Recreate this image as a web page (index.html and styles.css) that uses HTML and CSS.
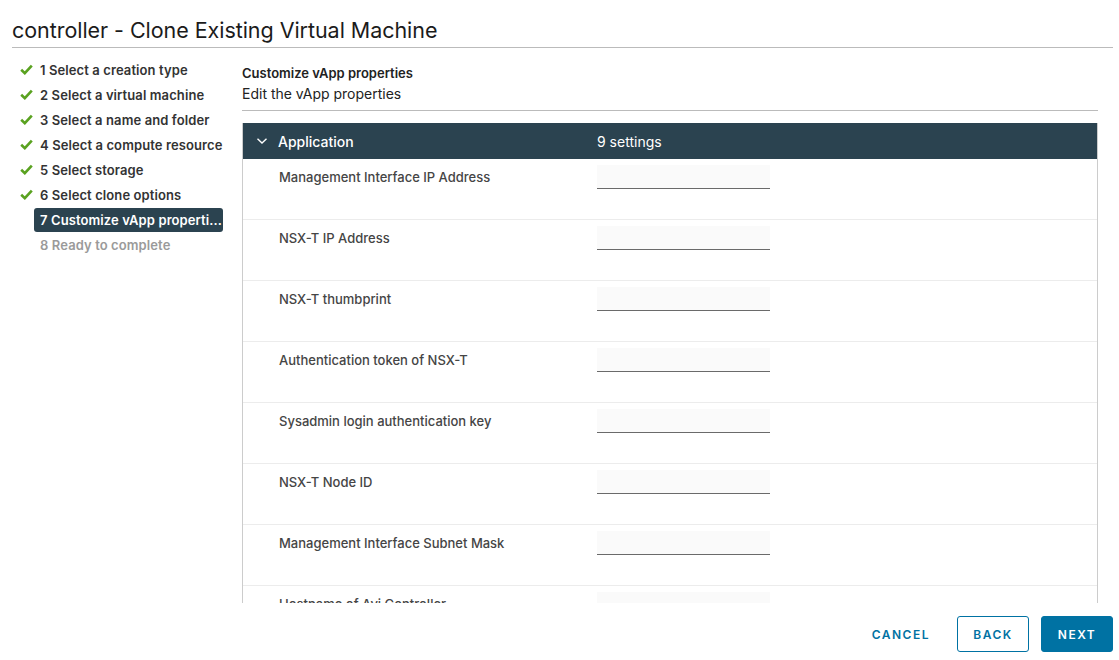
FILE: index.html
```html
<!DOCTYPE html>
<html>
<head>
<meta charset="utf-8">
<link rel="stylesheet" href="styles.css">
</head>
<body>
<div class="page">
  <header class="title-bar">
    <h1 class="title">controller - Clone Existing Virtual Machine</h1>
  </header>
  <div class="wizard">
    <nav class="steps">
      <div class="step done"><span class="check"><svg width="13" height="11" viewBox="0 0 13 11"><path d="M1.2 5.8 L4.8 9.2 L11.8 1.6" fill="none" stroke="#5aa220" stroke-width="2.6"/></svg></span><span class="step-label">1 Select a creation type</span></div>
      <div class="step done"><span class="check"><svg width="13" height="11" viewBox="0 0 13 11"><path d="M1.2 5.8 L4.8 9.2 L11.8 1.6" fill="none" stroke="#5aa220" stroke-width="2.6"/></svg></span><span class="step-label">2 Select a virtual machine</span></div>
      <div class="step done"><span class="check"><svg width="13" height="11" viewBox="0 0 13 11"><path d="M1.2 5.8 L4.8 9.2 L11.8 1.6" fill="none" stroke="#5aa220" stroke-width="2.6"/></svg></span><span class="step-label">3 Select a name and folder</span></div>
      <div class="step done"><span class="check"><svg width="13" height="11" viewBox="0 0 13 11"><path d="M1.2 5.8 L4.8 9.2 L11.8 1.6" fill="none" stroke="#5aa220" stroke-width="2.6"/></svg></span><span class="step-label">4 Select a compute resource</span></div>
      <div class="step done"><span class="check"><svg width="13" height="11" viewBox="0 0 13 11"><path d="M1.2 5.8 L4.8 9.2 L11.8 1.6" fill="none" stroke="#5aa220" stroke-width="2.6"/></svg></span><span class="step-label">5 Select storage</span></div>
      <div class="step done"><span class="check"><svg width="13" height="11" viewBox="0 0 13 11"><path d="M1.2 5.8 L4.8 9.2 L11.8 1.6" fill="none" stroke="#5aa220" stroke-width="2.6"/></svg></span><span class="step-label">6 Select clone options</span></div>
      <div class="step active"><span class="check"></span><span class="step-label">7 Customize vApp properti...</span></div>
      <div class="step pending"><span class="check"></span><span class="step-label">8 Ready to complete</span></div>
    </nav>
    <main class="content">
      <div class="content-head">
        <div class="content-title">Customize vApp properties</div>
        <div class="content-sub">Edit the vApp properties</div>
      </div>
      <div class="scroller">
        <div class="table">
          <div class="group-head">
            <span class="chev"><svg width="12" height="8" viewBox="0 0 12 8"><path d="M1.5 1.8 L6 6 L10.5 1.8" fill="none" stroke="#fff" stroke-width="1.4"/></svg></span>
            <span class="group-name">Application</span>
            <span class="group-count">9 settings</span>
          </div>
          <div class="row"><span class="label">Management Interface IP Address</span><span class="input"></span></div>
          <div class="row"><span class="label">NSX-T IP Address</span><span class="input"></span></div>
          <div class="row"><span class="label">NSX-T thumbprint</span><span class="input"></span></div>
          <div class="row"><span class="label">Authentication token of NSX-T</span><span class="input"></span></div>
          <div class="row"><span class="label">Sysadmin login authentication key</span><span class="input"></span></div>
          <div class="row"><span class="label">NSX-T Node ID</span><span class="input"></span></div>
          <div class="row"><span class="label">Management Interface Subnet Mask</span><span class="input"></span></div>
          <div class="row"><span class="label">Hostname of Avi Controller</span><span class="input"></span></div>
        </div>
      </div>
    </main>
  </div>
  <footer class="footer">
    <button class="btn btn-link">CANCEL</button>
    <button class="btn btn-outline">BACK</button>
    <button class="btn btn-primary">NEXT</button>
  </footer>
</div>
</body>
</html>
```
FILE: styles.css
```css
* { box-sizing: border-box; }
html, body { margin: 0; padding: 0; background: #fff; }
body {
  font-family: Inter, "Noto Sans", "Liberation Sans", sans-serif;
  color: #333;
  width: 1119px;
  height: 660px;
  overflow: hidden;
}
.page {
  display: flex;
  flex-direction: column;
  height: 660px;
}
.title-bar {
  margin: 0 6px 0 12px;
  border-bottom: 1px solid #bbb;
  height: 48px;
  padding-top: 16px;
}
.title {
  margin: 0;
  font-size: 21.5px;
  font-weight: 400;
  line-height: 28px;
  color: #1b1b1b;
  letter-spacing: -0.05px;
}
.wizard {
  display: flex;
  flex: 1;
  min-height: 0;
}
.steps {
  width: 242px;
  padding: 9px 0 0 12px;
  display: flex;
  flex-direction: column;
}
.step {
  display: flex;
  align-items: center;
  height: 25px;
}
.check {
  width: 22px;
  display: flex;
  justify-content: flex-start;
  padding-left: 8px;
}
.step-label {
  font-size: 13px;
  font-weight: 600;
  color: #333;
  padding: 0 6px;
  height: 24px;
  line-height: 24px;
  border-radius: 3px;
  white-space: nowrap;
  letter-spacing: 0.1px;
}
.step.active .step-label {
  background: #2b4350;
  color: #fff;
  width: 189px;
  overflow: hidden;
}
.step.pending .step-label { color: #9a9a9a; }
.content {
  flex: 1;
  margin-right: 21px;
  display: flex;
  flex-direction: column;
  min-height: 0;
}
.content-head {
  padding-top: 16px;
  border-bottom: 1px solid #bbb;
  height: 63px;
}
.content-title {
  font-size: 13px;
  font-weight: 600;
  line-height: 18px;
  color: #222;
}
.content-sub {
  font-size: 14px;
  line-height: 18px;
  margin-top: 3px;
  color: #222;
}
.scroller {
  flex: 1;
  min-height: 0;
  overflow: hidden;
  margin-top: 12px;
}
.table {
  border: 1px solid #ccc;
  border-top: none;
}
.group-head {
  background: #2b4350;
  height: 36px;
  display: flex;
  align-items: center;
  color: #fff;
  font-size: 14px;
  font-weight: 500;
}
.chev {
  width: 35px;
  display: flex;
  padding-left: 13px;
}
.group-name { width: 319px; }
.group-count { font-weight: 400; }
.row {
  display: flex;
  height: 61px;
  border-bottom: 1px solid #ececec;
  padding-left: 36px;
  padding-top: 6px;
}
.label {
  width: 318px;
  font-size: 13px;
  font-weight: 500;
  color: #454545;
  line-height: 22px;
  padding-top: 1px;
}
.input {
  width: 173px;
  height: 24px;
  background: #fafafa;
  border-bottom: 1px solid #6a6a6a;
}
.footer {
  height: 57px;
  display: flex;
  justify-content: flex-end;
  align-items: flex-start;
  padding: 13px 6px 0 0;
  gap: 12px;
}
.btn {
  font-family: Inter, "Noto Sans", "Liberation Sans", sans-serif;
  height: 36px;
  font-size: 12px;
  font-weight: 600;
  letter-spacing: 1.5px;
  border-radius: 3px;
  padding: 0 12px;
  cursor: pointer;
}
.btn-link {
  background: transparent;
  border: 1px solid transparent;
  color: #0072a3;
  margin-right: 2px;
}
.btn-outline {
  background: #fff;
  border: 1px solid #0072a3;
  color: #0072a3;
  width: 72px;
}
.btn-primary {
  background: #0072a3;
  border: 1px solid #0072a3;
  color: #fff;
  width: 72px;
}
```
